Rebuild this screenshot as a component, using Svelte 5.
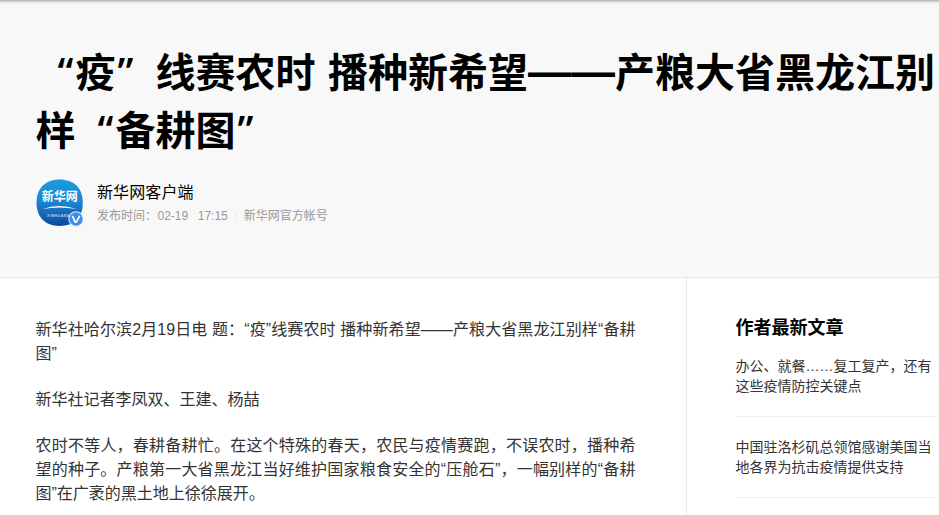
<script lang="ts">
  interface Article {
    id: number;
    title: string;
  }

  const author = {
    name: "新华网客户端",
    date: "02-19",
    time: "17:15",
    account: "新华网官方帐号",
  };

  const paragraphs = [
    "新华社哈尔滨2月19日电 题：“疫”线赛农时 播种新希望——产粮大省黑龙江别样“备耕图”",
    "新华社记者李凤双、王建、杨喆",
    "农时不等人，春耕备耕忙。在这个特殊的春天，农民与疫情赛跑，不误农时，播种希望的种子。产粮第一大省黑龙江当好维护国家粮食安全的“压舱石”，一幅别样的“备耕图”在广袤的黑土地上徐徐展开。",
  ];

  const latest: Article[] = [
    { id: 1, title: "办公、就餐……复工复产，还有这些疫情防控关键点" },
    { id: 2, title: "中国驻洛杉矶总领馆感谢美国当地各界为抗击疫情提供支持" },
  ];
</script>

<div class="page" lang="zh-CN">
  <header class="header">
    <h1>
      <span class="quote open">“</span>疫<span class="quote">”</span>线赛农时 播种新希望<span class="dash">——</span>产粮大省黑龙江别<br />样<span class="quote open">“</span>备耕图<span class="quote">”</span>
    </h1>

    <div class="author">
      <div class="avatar">
        <svg width="48" height="48" viewBox="0 0 48 48" aria-hidden="true">
          <defs>
            <linearGradient id="avatar-bg" x1="0" y1="0" x2="0" y2="1">
              <stop offset="0" stop-color="#1b9be0" />
              <stop offset="0.5" stop-color="#1c83cf" />
              <stop offset="1" stop-color="#0c479c" />
            </linearGradient>
          </defs>
          <path
            d="M23.5 .5C38 .5 46.8 9 46.8 23.8S38 47 23.5 47 .5 38 .5 23.8 9 .5 23.5 .5Z"
            fill="url(#avatar-bg)"
          />
          <text class="logo" x="23.7" y="22" text-anchor="middle">新华网</text>
          <path d="M6.5 30Q23 24 40.5 30Q23 27 6.5 30Z" fill="#fff" />
          <text class="logo-latin" x="11" y="37.5" textLength="25">XINHUANET</text>
        </svg>
        <svg class="badge" width="16" height="16" viewBox="0 0 16 16" aria-hidden="true">
          <circle cx="8" cy="8" r="7.7" fill="#e4effb" />
          <circle cx="8" cy="8" r="6.7" fill="#3b8df2" />
          <path d="M4.4 4.9 7.2 11.2H8.1L11.8 4.9" fill="none" stroke="#fff" stroke-width="1.7" />
        </svg>
      </div>
      <div class="info">
        <p class="name">{author.name}</p>
        <p class="meta">
          <span>发布时间：</span>
          <span class="date">{author.date}</span>
          <span class="time">{author.time}</span>
          <span class="account">{author.account}</span>
        </p>
      </div>
    </div>
  </header>

  <div class="content">
    <article>
      {#each paragraphs as text}
        <p>{text}</p>
      {/each}
    </article>

    <aside>
      <h2>作者最新文章</h2>
      <ul>
        {#each latest as item (item.id)}
          <li>{item.title}</li>
        {/each}
      </ul>
    </aside>
  </div>
</div>

<style>
  :global(body) {
    background: #fff;
    overflow: hidden;
  }

  .page {
    display: flex;
    flex-direction: column;
    box-sizing: border-box;
    width: 939px;
    height: 515px;
    overflow: hidden;
    color: #333;
    font-family: "Liberation Sans", "Noto Sans CJK SC", sans-serif;
  }

  h1,
  h2,
  p,
  ul {
    margin: 0;
    padding: 0;
  }

  .header {
    box-sizing: border-box;
    flex: none;
    height: 278px;
    padding: 41px 0 0 35.5px;
    border-bottom: 1px solid #e8e8e8;
    background:
      linear-gradient(#b8b8b8, #c4c4c4 1px, #e0e0e0 2px, #f0f0f0 3px, #f8f8f8 5px) top / 100% 5px
        no-repeat,
      #f8f8f8;
  }

  h1 {
    color: #000;
    font-family: "Noto Sans CJK SC", sans-serif;
    font-size: 40px;
    font-weight: 700;
    line-height: 58px;
    white-space: nowrap;
    word-spacing: 3.5px;
  }

  .quote {
    display: inline-block;
    box-sizing: border-box;
    width: 40px;
    padding: 0 2px;
    font-family: "Open Sans", sans-serif;
    font-weight: 600;
    line-height: 1;
  }

  .quote.open {
    text-align: right;
  }

  .dash {
    font-family: "Liberation Sans", sans-serif;
    font-size: 43.5px;
    line-height: 0;
  }

  .author {
    display: flex;
    margin-top: 22px;
    padding-left: 0.5px;
  }

  .avatar {
    position: relative;
    width: 48px;
    height: 48px;
  }

  .avatar svg {
    display: block;
  }

  .avatar .badge {
    position: absolute;
    right: 0.5px;
    bottom: 0;
  }

  .logo {
    fill: #fff;
    font-family: "Noto Sans CJK SC", sans-serif;
    font-size: 12px;
    font-weight: 700;
  }

  .logo-latin {
    fill: #b9d5f0;
    font-size: 3.6px;
    font-weight: 700;
  }

  .info {
    padding: 2px 0 0 13px;
  }

  .name {
    color: #000;
    font-size: 16px;
    line-height: 24px;
    letter-spacing: 0.1px;
  }

  .meta {
    display: flex;
    align-items: center;
    margin-top: 3px;
    color: #999;
    font-size: 12px;
    line-height: 16px;
  }

  .date {
    margin-left: 0.5px;
  }

  .time {
    margin-left: 9.5px;
  }

  .account {
    display: flex;
    align-items: center;
  }

  .account::before {
    width: 1px;
    height: 11px;
    margin: 0 8px 0 7px;
    background: #e8e8e8;
    content: "";
  }

  .content {
    display: flex;
    flex: 1;
    min-height: 0;
  }

  article {
    box-sizing: border-box;
    width: 687px;
    padding: 40px 50.5px 0 35.5px;
    border-right: 1px solid #e8e8e8;
  }

  article p {
    font-size: 16px;
    line-height: 24px;
    text-align: justify;
  }

  article p + p {
    margin-top: 22px;
  }

  aside {
    width: 200.5px;
    padding: 38px 0 0 48.5px;
  }

  h2 {
    color: #000;
    font-size: 18px;
    font-weight: 700;
    line-height: 24px;
  }

  ul {
    margin-top: 16px;
    list-style: none;
  }

  li {
    margin-bottom: 20px;
    padding-bottom: 20px;
    border-bottom: 1px solid #eee;
    font-size: 14px;
    line-height: 20px;
  }
</style>
